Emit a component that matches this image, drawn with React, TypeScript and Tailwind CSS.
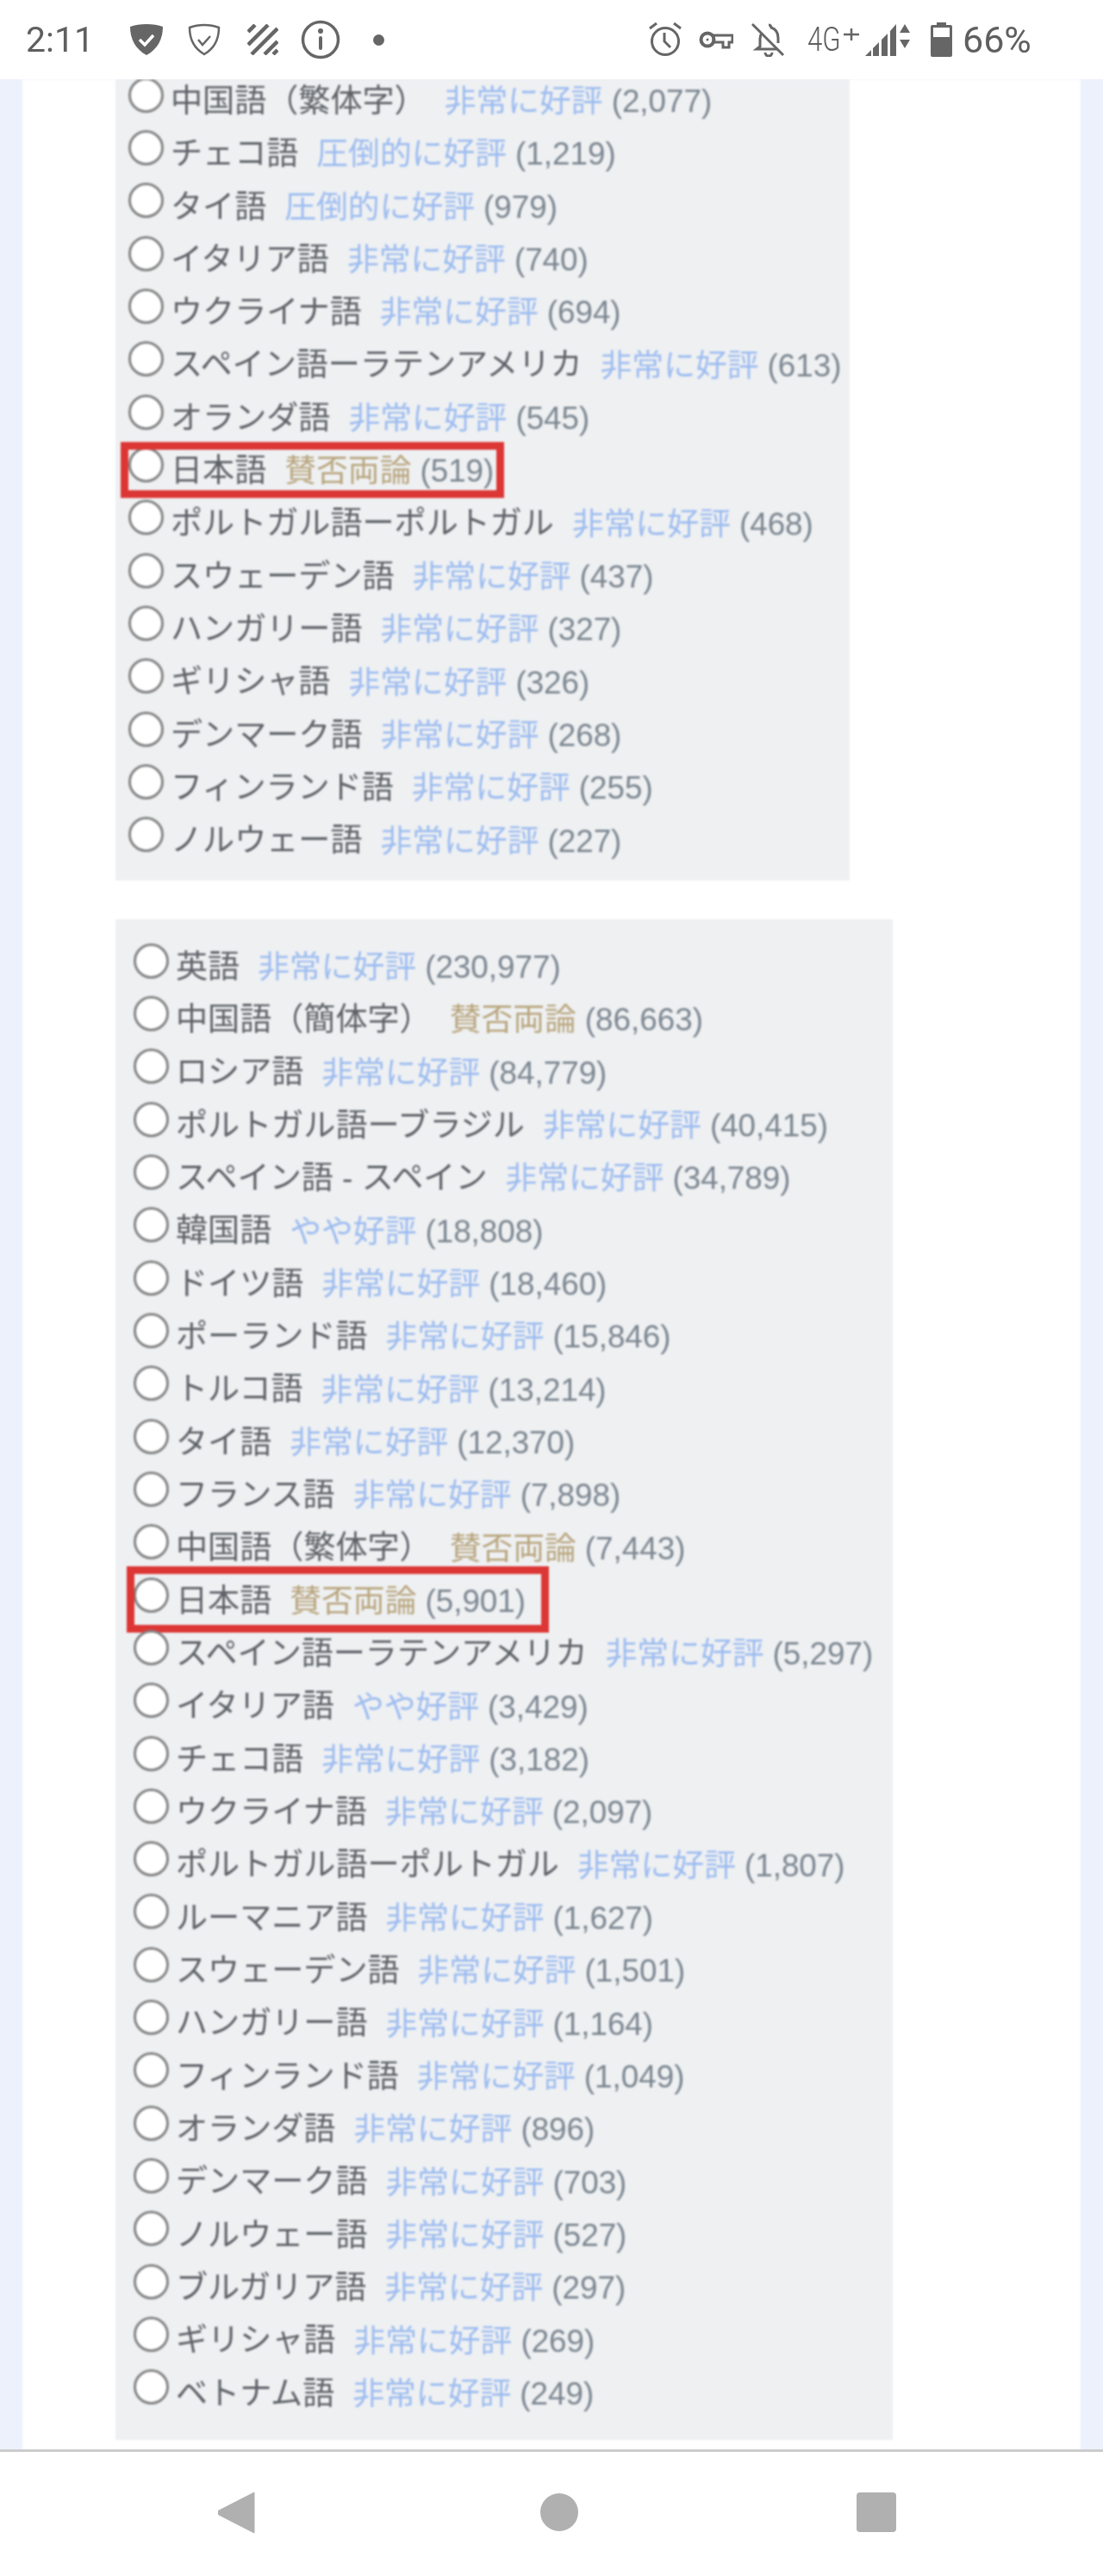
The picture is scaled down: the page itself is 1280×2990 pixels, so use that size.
type Row = { name: string; rating: string; count: string; box?: string };

const GOOD = "非常に好評";
const MIXED = "賛否両論";
const BEST = "圧倒的に好評";
const FAIR = "やや好評";

const firstList: Row[] = [
  { name: "中国語（繁体字）", rating: GOOD, count: "(2,077)" },
  { name: "チェコ語", rating: BEST, count: "(1,219)" },
  { name: "タイ語", rating: BEST, count: "(979)" },
  { name: "イタリア語", rating: GOOD, count: "(740)" },
  { name: "ウクライナ語", rating: GOOD, count: "(694)" },
  { name: "スペイン語ーラテンアメリカ", rating: GOOD, count: "(613)" },
  { name: "オランダ語", rating: GOOD, count: "(545)" },
  { name: "日本語", rating: MIXED, count: "(519)", box: "-left-[9px] -top-[3px] w-[445px] h-[65px]" },
  { name: "ポルトガル語ーポルトガル", rating: GOOD, count: "(468)" },
  { name: "スウェーデン語", rating: GOOD, count: "(437)" },
  { name: "ハンガリー語", rating: GOOD, count: "(327)" },
  { name: "ギリシャ語", rating: GOOD, count: "(326)" },
  { name: "デンマーク語", rating: GOOD, count: "(268)" },
  { name: "フィンランド語", rating: GOOD, count: "(255)" },
  { name: "ノルウェー語", rating: GOOD, count: "(227)" },
];

const secondList: Row[] = [
  { name: "英語", rating: GOOD, count: "(230,977)" },
  { name: "中国語（簡体字）", rating: MIXED, count: "(86,663)" },
  { name: "ロシア語", rating: GOOD, count: "(84,779)" },
  { name: "ポルトガル語ーブラジル", rating: GOOD, count: "(40,415)" },
  { name: "スペイン語 - スペイン", rating: GOOD, count: "(34,789)" },
  { name: "韓国語", rating: FAIR, count: "(18,808)" },
  { name: "ドイツ語", rating: GOOD, count: "(18,460)" },
  { name: "ポーランド語", rating: GOOD, count: "(15,846)" },
  { name: "トルコ語", rating: GOOD, count: "(13,214)" },
  { name: "タイ語", rating: GOOD, count: "(12,370)" },
  { name: "フランス語", rating: GOOD, count: "(7,898)" },
  { name: "中国語（繁体字）", rating: MIXED, count: "(7,443)" },
  { name: "日本語", rating: MIXED, count: "(5,901)", box: "-left-[8px] -top-[10px] w-[490px] h-[77px]" },
  { name: "スペイン語ーラテンアメリカ", rating: GOOD, count: "(5,297)" },
  { name: "イタリア語", rating: FAIR, count: "(3,429)" },
  { name: "チェコ語", rating: GOOD, count: "(3,182)" },
  { name: "ウクライナ語", rating: GOOD, count: "(2,097)" },
  { name: "ポルトガル語ーポルトガル", rating: GOOD, count: "(1,807)" },
  { name: "ルーマニア語", rating: GOOD, count: "(1,627)" },
  { name: "スウェーデン語", rating: GOOD, count: "(1,501)" },
  { name: "ハンガリー語", rating: GOOD, count: "(1,164)" },
  { name: "フィンランド語", rating: GOOD, count: "(1,049)" },
  { name: "オランダ語", rating: GOOD, count: "(896)" },
  { name: "デンマーク語", rating: GOOD, count: "(703)" },
  { name: "ノルウェー語", rating: GOOD, count: "(527)" },
  { name: "ブルガリア語", rating: GOOD, count: "(297)" },
  { name: "ギリシャ語", rating: GOOD, count: "(269)" },
  { name: "ベトナム語", rating: GOOD, count: "(249)" },
];

const LangRow = ({ row }: { row: Row }) => (
  <div className="relative flex h-[61.33px] items-center whitespace-nowrap">
    <input
      type="radio"
      readOnly
      className="mb-[15px] h-[41px] w-[41px] shrink-0 appearance-none rounded-full border-[3px] border-[#858585] bg-white"
    />
    <span className="ml-[8px] text-[37.1px] text-[#5f6368]">{row.name}</span>
    <span className={row.rating === MIXED ? "ml-[21px] text-[#b9a67f]" : "ml-[21px] text-[#9dbcf0]"}>{row.rating}</span>
    <span className="ml-[10px] text-[#7d8791]">{row.count}</span>
    {row.box && <div className={`absolute border-[9px] border-[#dc3735] ${row.box}`} />}
  </div>
);

const StatusBar = () => (
  <div className="flex h-[92px] shrink-0 items-center bg-white font-['Roboto',sans-serif] text-[#5f5f5f] blur-[0.4px]">
    <span className="ml-[30px] w-[78px] text-[41px] leading-none">2:11</span>
    {/* filled shield */}
    <svg className="ml-[42px]" width="40" height="38" viewBox="0 0 40 38">
      <path d="M20 1C13 1 6 2 1 4c0 14 6 26 19 33C33 30 39 18 39 4 34 2 27 1 20 1z" fill="#666" />
      <path d="M12 19l6 6 10-11" fill="none" stroke="#fff" strokeWidth="3.5" />
    </svg>
    {/* outlined shield */}
    <svg className="ml-[28px]" width="38" height="38" viewBox="0 0 38 38">
      <path d="M19 2C13 2 7 3 2 5c0 13 5 24 17 31C31 29 36 18 36 5 31 3 25 2 19 2z" fill="none" stroke="#666" strokeWidth="2.5" />
      <path d="M12 19l5 6 9-10" fill="none" stroke="#666" strokeWidth="2.5" />
    </svg>
    {/* stripes */}
    <svg className="ml-[31px]" width="36" height="36" viewBox="0 0 36 36">
      <g stroke="#666" strokeWidth="4.5">
        <path d="M1 9L9 1" />
        <path d="M1 24L24 1" />
        <path d="M5 35L35 5" />
        <path d="M20 35L35 20" />
        <path d="M30 35l5-5" />
      </g>
    </svg>
    {/* info */}
    <svg className="ml-[26px]" width="46" height="46" viewBox="0 0 46 46">
      <circle cx="23" cy="23" r="20.5" fill="none" stroke="#666" strokeWidth="3.5" />
      <circle cx="23" cy="13" r="3" fill="#666" />
      <rect x="21" y="19" width="4" height="16" rx="2" fill="#666" />
    </svg>
    <div className="ml-[38px] h-[13px] w-[13px] rounded-full bg-[#666]" />
    {/* alarm */}
    <svg className="ml-[307px]" width="38" height="40" viewBox="0 0 38 40">
      <circle cx="19" cy="22" r="15.5" fill="none" stroke="#666" strokeWidth="3" />
      <path d="M18 12v10l7 7" fill="none" stroke="#666" strokeWidth="3" />
      <path d="M1 7l8-6M37 7l-8-6" stroke="#666" strokeWidth="3" />
    </svg>
    {/* key */}
    <svg className="ml-[20px]" width="40" height="22" viewBox="0 0 40 22">
      <circle cx="10" cy="11" r="7.5" fill="none" stroke="#666" strokeWidth="4" />
      <circle cx="10" cy="11" r="1.5" fill="#666" />
      <path d="M17 6h22v8h-4v6h-7v-6H17z" fill="none" stroke="#666" strokeWidth="3" />
    </svg>
    {/* muted bell */}
    <svg className="ml-[21px]" width="39" height="40" viewBox="0 0 39 40">
      <path d="M20 3a3 3 0 013 3c6 2 8 6 8 12v6M12 12c-1 2-2 4-2 7v9l-4 3h24M16 35a4 4 0 008 0" fill="none" stroke="#666" strokeWidth="3" />
      <path d="M1 2l36 36" stroke="#666" strokeWidth="3" />
    </svg>
    {/* condensed 4G with its plus */}
    <span className="ml-[26px] w-[40px] origin-left scale-x-[0.8] text-[39px] leading-none font-light">4G</span>
    <svg className="-mt-[12px] ml-[2px]" width="18" height="14" viewBox="0 0 18 14">
      <path d="M9 0v14M0 7h18" stroke="#666" strokeWidth="2.5" />
    </svg>
    {/* signal */}
    <svg className="ml-[7px]" width="54" height="38" viewBox="0 0 54 38">
      <path d="M0 38l7-7v7zM9 38V29l7-7v16zM19 38V19l7-7v26zM29 38V9l7-8v37z" fill="#666" />
      <path d="M46 1l6 10H40zM40 19h12l-6 10z" fill="#666" />
    </svg>
    {/* battery */}
    <svg className="ml-[22px]" width="25" height="40" viewBox="0 0 25 40">
      <path d="M7 0h11v3h5a2 2 0 012 2v33a2 2 0 01-2 2H2a2 2 0 01-2-2V5a2 2 0 012-2h5z" fill="#666" />
      <rect x="3" y="6" width="19" height="11" fill="#fff" />
    </svg>
    <span className="ml-[12px] text-[43px] leading-none">66%</span>
  </div>
);

const NavBar = () => (
  <div className="flex h-[147px] shrink-0 items-center border-t-[3px] border-[#cccccc] bg-white pb-[4px]">
    <svg className="ml-[253px]" width="43" height="49" viewBox="0 0 43 49">
      <path d="M42 1v47L1 27a3 3 0 010-5z" fill="#b0b0b0" stroke="#b0b0b0" strokeLinejoin="round" />
    </svg>
    <div className="ml-[331px] h-[44px] w-[44px] rounded-full bg-[#b0b0b0]" />
    <div className="ml-[323px] h-[46px] w-[46px] rounded-[4px] bg-[#b0b0b0]" />
  </div>
);

export default function App() {
  return (
    <div className="flex h-[2990px] w-[1280px] flex-col overflow-hidden bg-white font-['Liberation_Sans','Noto_Sans_CJK_JP',sans-serif] text-[36.8px]">
      <StatusBar />
      <div className="h-[2751px] overflow-hidden bg-[#edf1fb] px-[26px]">
        <div className="h-full overflow-hidden bg-white pl-[108px] blur-[0.8px]">
          <div className="-mt-[5px] w-[852px] bg-[#eef0f2] pb-[15px] pl-[15px]">
            {firstList.map((row) => (
              <LangRow key={row.name} row={row} />
            ))}
          </div>
          <div className="mt-[45px] w-[902px] bg-[#eef0f2] pb-[23px] pl-[21px] pt-[25px]">
            {secondList.map((row) => (
              <LangRow key={row.name + row.count} row={row} />
            ))}
          </div>
        </div>
      </div>
      <NavBar />
    </div>
  );
}
